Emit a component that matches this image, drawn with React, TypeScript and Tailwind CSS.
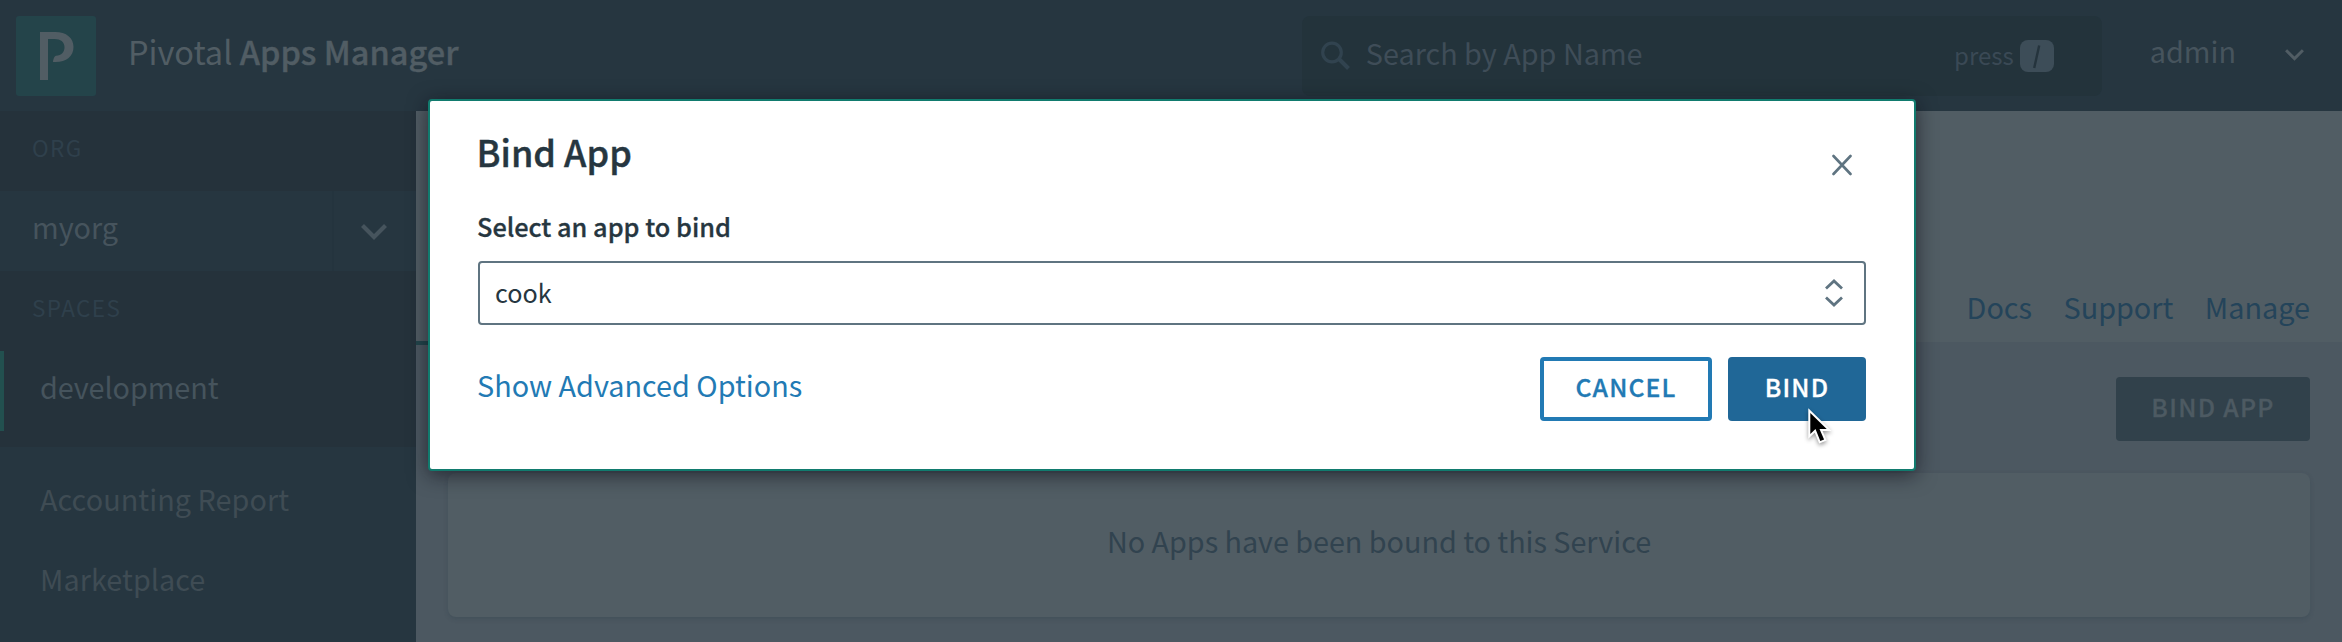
import type { ReactNode } from "react";

function Chevron({ className, strokeWidth }: { className: string; strokeWidth: number }) {
  return (
    <svg viewBox="0 0 26 16" className={className} fill="none" stroke="currentColor" strokeWidth={strokeWidth}>
      <path d="M1.5 1.5 13 13 24.5 1.5" />
    </svg>
  );
}

function Header() {
  return (
    <header className="flex h-[111px] shrink-0 items-center bg-[#263640]">
      <div className="ml-4 flex size-20 shrink-0 rounded-[3px] bg-[#24444a]">
        <svg viewBox="0 0 80 80" className="size-20" fill="#515d64">
          <path d="M24 16h15c11.500 0 18.500 6 18.500 15s-7 15-18 15h-2.500c.3-3 1.500-6 3-6.200 5.500-.5 8.500-3.500 8.500-8.500 0-5.500-4-8.300-10-8.300h-6.500V64h-8z" />
        </svg>
      </div>
      <h1 className="ml-8 pb-[9px] text-[32.5px] leading-[48px] whitespace-pre text-[#515d64]">
        Pivotal <span className="font-medium tracking-[0.03px] [-webkit-text-stroke:0.4px]">Apps Manager</span>
      </h1>
      <div className="ml-auto flex h-20 w-[800px] items-center rounded-lg bg-[#23333b] pr-12 pb-1 pl-[18px]">
        <svg viewBox="0 0 30 30" className="mt-0.5 size-[30px] text-[#31434f]" fill="none" stroke="currentColor">
          <circle cx="12" cy="12.500" r="9.300" strokeWidth="3.200" />
          <path d="m18.500 18.500 10 10" strokeWidth="4" />
        </svg>
        <span className="mb-0.5 ml-4 text-[28.8px] leading-10 text-[#3f4d58]">Search by App Name</span>
        <span className="mt-[3px] ml-auto text-2xl leading-8 text-[#3a4955]">press</span>
        <span className="mt-1 ml-1.5 flex h-8 w-[34px] items-center justify-center rounded-lg bg-[#3d4d58]">
          <svg viewBox="0 0 34 32" className="h-8 w-[34px]" stroke="#25343d" strokeWidth="2.400">
            <path d="m14.200 28 5-22.500" />
          </svg>
        </span>
      </div>
      <span className="ml-12 pb-[9px] text-[28.8px] leading-10 text-[#46545d]">admin</span>
      <Chevron className="mr-[38px] mb-px ml-[49px] h-3 w-[19px] text-[#515d64]" strokeWidth={4} />
    </header>
  );
}

function SideLink({ children }: { children: ReactNode }) {
  return (
    <div className="flex h-20 items-center pb-[9px] pl-10 text-[28.8px] leading-10 tracking-[0.05px] text-[#3f4c54]">
      {children}
    </div>
  );
}

function Sidebar() {
  return (
    <aside className="flex w-[416px] shrink-0 flex-col bg-[#263640]">
      <div className="flex h-20 items-center bg-[#25323b] pb-2 pl-8 text-[22.5px] leading-8 tracking-[1.4px] text-[#2f404c]">
        ORG
      </div>
      <div className="flex h-20 text-[#46545d]">
        <div className="flex w-[334px] items-center border-r-2 border-[#24343e] pb-2 pl-8 text-[28.8px] leading-10">
          myorg
        </div>
        <Chevron className="mt-[33px] ml-[27px] h-4 w-[26px]" strokeWidth={4.2} />
      </div>
      <div className="bg-[#25323b] pb-4">
        <div className="flex h-20 items-center pb-2 pl-8 text-[22.5px] leading-8 tracking-[1.4px] text-[#2f404c]">
          SPACES
        </div>
        <div className="flex h-20 items-center border-l-4 border-[#22504f] pb-[9px] pl-9 text-[28.8px] leading-10 tracking-[-0.08px] text-[#46545d]">
          development
        </div>
      </div>
      <nav className="pt-4">
        <SideLink>Accounting Report</SideLink>
        <SideLink>Marketplace</SideLink>
      </nav>
    </aside>
  );
}

function ServicePage() {
  return (
    <main className="flex grow flex-col bg-[#4c5861]">
      <div className="flex h-[232px] shrink-0 items-end justify-between border-b border-[#4c5861] bg-[#515d64]">
        <div className="-mb-[3px] h-1 w-[200px] bg-[#22454b]" />
        <nav className="mr-8 mb-[15px] flex gap-[31.5px] text-[28.8px] leading-10 text-[#24445a]">
          <a>Docs</a>
          <a>Support</a>
          <a>Manage</a>
        </nav>
      </div>
      <div className="flex flex-col px-8 pt-[34px]">
        <button className="ml-auto h-16 w-[194px] rounded bg-[#31414b] pb-1.5 text-[24.8px] leading-8 font-medium tracking-[1.3px] text-[#4d5a62] [-webkit-text-stroke:0.3px]">
          BIND APP
        </button>
        <div className="mt-8 flex h-36 items-center justify-center rounded-lg bg-[#515d64] pb-[9px] text-[28.8px] leading-10 tracking-[-0.04px] text-[#31434f] shadow-[0_2px_4px_rgba(40,60,72,0.25)]">
          No Apps have been bound to this Service
        </div>
      </div>
    </main>
  );
}

function BindDialog() {
  return (
    <div
      role="dialog"
      className="absolute top-[99px] left-[428px] flex h-[372px] w-[1488px] flex-col rounded border-2 border-[#117b6e] bg-white px-12 pt-[26px] text-[#263640] shadow-[0_4px_20px_rgba(10,10,20,0.6)]"
    >
      <div className="flex h-12 justify-between">
        <h2 className="-ml-[1.5px] text-[36px] leading-[48px] font-medium [-webkit-text-stroke:0.4px]">Bind App</h2>
        <svg viewBox="0 0 20 22" className="mt-[27px] mr-3.5 h-[22px] w-5" stroke="#5f7481" strokeWidth="2.600" strokeLinecap="round">
          <path d="m1.500 2 17 18M18.500 2l-17 18" />
        </svg>
      </div>
      <label className="mt-[33px] -ml-px text-[25.3px] leading-9 font-medium [-webkit-text-stroke:0.3px]">
        Select an app to bind
      </label>
      <div className="mt-[17px] flex h-16 shrink-0 items-center justify-between rounded border-2 border-[#5f7481] pr-[21px] pl-[15px]">
        <span className="pb-[3px] text-[25.2px] leading-9">cook</span>
        <svg viewBox="0 0 18 28" className="h-7 w-[18px]" fill="none" stroke="#5f7481" strokeWidth="2.800">
          <path d="m1 9.500 8-7.500 8 7.500M1 18.500l8 7.500 8-7.500" />
        </svg>
      </div>
      <div className="mt-8 flex h-16 shrink-0 items-center gap-4">
        <a className="mr-auto -ml-px pb-[9px] text-[28.8px] leading-10 text-[#227ab4]">Show Advanced Options</a>
        <button className="h-16 w-[172px] rounded border-4 border-[#227ab4] pb-1.5 text-[24.8px] leading-8 font-medium tracking-[1.1px] text-[#227ab4] [-webkit-text-stroke:0.3px]">
          CANCEL
        </button>
        <button className="h-16 w-[138px] rounded bg-[#206797] pb-1.5 text-[24.8px] leading-8 font-medium tracking-[1.2px] text-white [-webkit-text-stroke:0.3px]">
          BIND
        </button>
      </div>
    </div>
  );
}

function Pointer() {
  return (
    <svg
      viewBox="0 0 28 42"
      className="absolute top-[406px] left-[1807px] h-[42px] w-7 drop-shadow-[0_2px_2px_rgba(0,0,0,0.4)]"
      fill="#000"
      stroke="#fff"
      strokeWidth="4"
      paintOrder="stroke"
    >
      <path d="M3.300 7V28l5.200-5 4.800 12 3.800-1.500-4.600-10.500h7.200z" />
    </svg>
  );
}

export default function App() {
  return (
    <div className="relative flex h-[642px] w-[2342px] flex-col overflow-hidden font-['Noto_Sans_CJK_SC','Noto_Sans',sans-serif]">
      <Header />
      <div className="flex grow">
        <Sidebar />
        <ServicePage />
      </div>
      <BindDialog />
      <Pointer />
    </div>
  );
}
